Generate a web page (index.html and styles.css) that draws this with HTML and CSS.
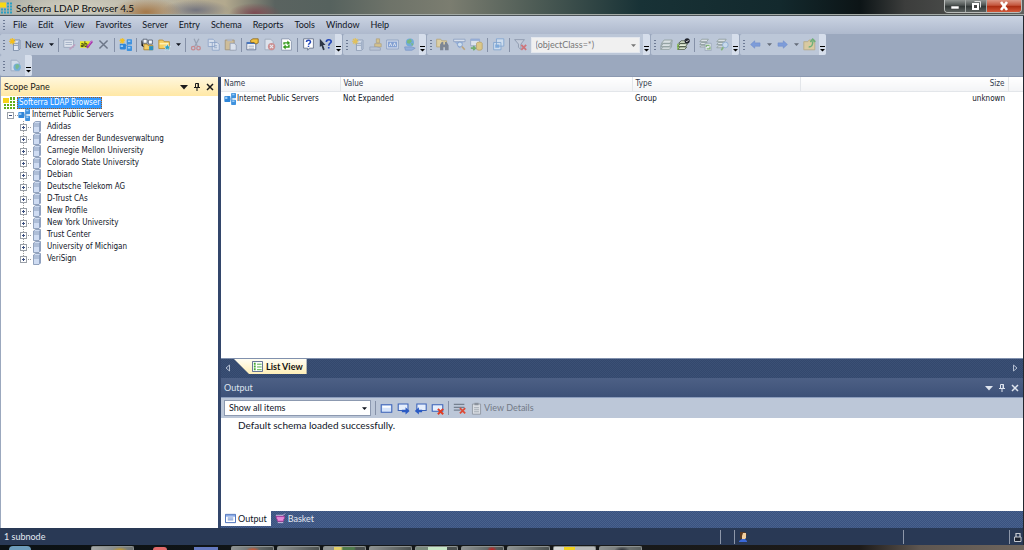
FILE: index.html
```html
<!DOCTYPE html>
<html lang="en">
<head>
    <meta charset="UTF-8">
    <meta name="viewport" content="width=device-width, initial-scale=1.0">
    <title>Softerra LDAP Browser 4.5</title>
    <link rel="stylesheet" href="styles.css">
</head>
<body>
    <!-- icon set -->
    <svg class="sprite" width="0" height="0" aria-hidden="true">
        <symbol id="app" viewBox="0 0 12 12">
            <path fill="#2a9fc4" d="M7 1h2v2H7zM10 1h2v2h-2zM7 4h2v2H7zM10 4h2v2h-2zM1 7h2v2H1zM4 7h2v2H4zM7 7h2v2H7zM10 7h2v2h-2zM1 10h2v2H1zM4 10h2v2H4zM7 10h2v2H7zM10 10h2v2h-2z"/>
            <path fill="#f7d914" d="M0 1h6v5H0z"/>
        </symbol>
        <symbol id="root" viewBox="0 0 12 12">
            <path fill="#5fae1c" d="M7 0h2v3H7zM10 0h2v3h-2zM7 4h2v2H7zM10 4h2v2h-2zM1 7h2v2H1zM4 7h2v2H4zM7 7h2v2H7zM10 7h2v2h-2zM1 10h2v2H1zM4 10h2v2H4zM7 10h2v2H7zM10 10h2v2h-2z"/>
            <path fill="#f5d21c" d="M0 1h6v5H0z"/>
        </symbol>
        <symbol id="server" viewBox="0 0 10 12">
            <path fill="#cfdcf2" stroke="#7c8fae" stroke-width=".8" d="M1.500 2l2-1.500h5v9.500l-1.500 1.500h-5.500z"/>
            <path fill="#8da0c0" d="M7 2l1.500-1.200v9.200L7 11.200z"/>
            <path stroke="#7c8fae" stroke-width=".8" d="M2 3h5M2 5h5"/>
        </symbol>
        <symbol id="nodes" viewBox="0 0 16 16">
            <path fill="none" stroke="#6a9fd0" stroke-width="1.500" d="M6 8h4l2-4M10 8l2 4"/>
            <rect x=".5" y="4" width="8" height="8" rx="1" fill="#2f86d8"/>
            <rect x="9.500" y="0" width="6.500" height="7" rx="1" fill="#3f92de"/>
            <rect x="9.500" y="9" width="6.500" height="7" rx="1" fill="#3f92de"/>
            <path fill="#9ccdf7" d="M1.500 5h3v3h-3zM11 1h3v2h-3zM11 10h3v2h-3z"/>
        </symbol>
        <symbol id="nodes-new" viewBox="0 0 16 16">
            <path fill="none" stroke="#6a9fd0" stroke-width="1.500" d="M7 9h3l2-4M10 9l2 4"/>
            <rect x="1" y="7" width="7.500" height="7" rx="1" fill="#2f86d8"/>
            <rect x="9.500" y="1.500" width="6.500" height="6.500" rx="1" fill="#3f92de"/>
            <rect x="9.500" y="9.500" width="6.500" height="6.500" rx="1" fill="#3f92de"/>
            <path fill="#9ccdf7" d="M2 9h3v2H2zM11 3h3v2h-3zM11 11h3v2h-3z"/>
            <path stroke="#f4c020" stroke-width="1.300" d="M4 0v7M.5 3.500h7M1.500 1l5 5M6.500 1l-5 5"/>
        </symbol>
        <symbol id="server-new" viewBox="0 0 16 16">
            <path fill="#e1e8f4" stroke="#6f819e" d="M5.500 4l2-1.500h6v11l-2 2h-6z"/>
            <path fill="#93a4bf" d="M11 4.500l2-1.500v10l-2 2z"/>
            <path stroke="#6f819e" d="M6 6.500h5M6 9h5"/>
            <path stroke="#f4bd1a" stroke-width="1.400" d="M4 0v8M0 4h8M1.200 1.200l5.600 5.600M6.800 1.200L1.200 6.800"/>
        </symbol>
        <symbol id="edit" viewBox="0 0 16 16">
            <path fill="#eef2f8" stroke="#7f8da6" d="M1 2.500h12v9H1z"/>
            <path stroke="#8b9ab5" d="M3 5.500h8M3 8h8"/>
            <path stroke="#c28bb2" stroke-width="2" d="M8 14l7-6"/>
        </symbol>
        <symbol id="rename" viewBox="0 0 16 16">
            <path fill="#e8ea28" d="M0 4h12v8H0z"/>
            <path fill="none" stroke="#434a18" stroke-width="1.200" d="M1.500 7h2.500v3.500H1.500V9H4M6 4v6.500h2.500V7H6"/>
            <path stroke="#a234a8" stroke-width="2.800" d="M8.500 12l6.500-8"/>
            <path stroke="#d878d8" d="M9.500 10l5.500-7"/>
        </symbol>
        <symbol id="cross" viewBox="0 0 16 16">
            <path stroke="#6c7688" stroke-width="1.800" d="M3 3l10 10M13 3L3 13"/>
        </symbol>
        <symbol id="copy-server" viewBox="0 0 16 16">
            <path fill="#f5f7fa" stroke="#4a5568" d="M2.500 1.500h5v5h-5zM9 2.500h5v5H9z"/>
            <path fill="#f3cd66" stroke="#a77f26" d="M3.500 7.500h4l1 1.500h6v5.500h-11z"/>
            <path fill="#2b91c0" d="M10 10h5v5h-5z"/>
            <path stroke="#333" d="M1 3v6l2 2"/>
        </symbol>
        <symbol id="folder-star" viewBox="0 0 16 16">
            <path fill="#f6cf5f" stroke="#b58a2b" d="M1 2.500h5l1.500 2H14v8.500H1z"/>
            <path fill="#fff0b0" d="M2 6h11v2H2z"/>
            <path fill="#2a9fc4" stroke="#fff" stroke-width=".6" d="M11.500 7l1.400 3 3 .3-2.300 2 .7 3-2.800-1.600L8.700 15.300l.8-3-2.400-2 3-.3z"/>
        </symbol>
        <symbol id="cut" viewBox="0 0 16 16">
            <path stroke="#858ea0" stroke-width="1.500" d="M5 1l4 9M11 1L6 10"/>
            <circle cx="4" cy="12.500" r="2.200" fill="none" stroke="#c96b6b" stroke-width="1.600"/>
            <circle cx="10.500" cy="12.500" r="2.200" fill="none" stroke="#c96b6b" stroke-width="1.600"/>
        </symbol>
        <symbol id="copy" viewBox="0 0 16 16">
            <path fill="#e6edf8" stroke="#6e8dbd" d="M1.500 1.500h6l2 2v7h-8zM6.500 5.500h6l2.500 2.500v7H6.500z"/>
            <path stroke="#6e8dbd" d="M3 5.500h4M8.500 9.500h4M8.500 12h4"/>
        </symbol>
        <symbol id="paste" viewBox="0 0 16 16">
            <path fill="#d8b878" stroke="#927848" d="M1.500 2.500h11v12h-11z"/>
            <path fill="#a9afbb" d="M4 1h6v3H4z"/>
            <path fill="#edf1f8" stroke="#7b88a0" d="M7.500 6.500h5l2.500 2v6.500H7.500z"/>
        </symbol>
        <symbol id="props" viewBox="0 0 16 16">
            <path fill="#fdfdfd" stroke="#56688a" d="M1 5.500h11v9H1z"/>
            <path fill="#4776c0" d="M1 5h11v2.500H1z"/>
            <path stroke="#8694ac" d="M3 10h7M3 12.500h7"/>
            <path fill="#f1c240" stroke="#8a651c" d="M5.500 3l3-2H15v5l-3 1.500-2-2H6z"/>
        </symbol>
        <symbol id="doc-del" viewBox="0 0 16 16">
            <path fill="#eef1f6" stroke="#8a96a9" d="M2.500 1.500h7l3 3v10h-10z"/>
            <circle cx="10.500" cy="10.500" r="4.500" fill="#d5736d"/>
            <path stroke="#fff" stroke-width="1.400" d="M8.500 8.500l4 4M12.500 8.500l-4 4"/>
        </symbol>
        <symbol id="refresh" viewBox="0 0 16 16">
            <path fill="#fff" stroke="#7f8da6" d="M2 1h9l3 3v11H2z"/>
            <path fill="none" stroke="#339a1c" stroke-width="1.800" d="M5 8V6h5M11 8v3H6"/>
            <path fill="#339a1c" d="M9 3l3.500 3L9 8.500zM7 8l-3.500 3L7 14z"/>
        </symbol>
        <symbol id="help" viewBox="0 0 16 16">
            <path fill="#fff" stroke="#5a6780" d="M2 1h12v11.500H9l-2 2.500v-2.500H2z"/>
            <path fill="none" stroke="#2246b8" stroke-width="1.800" d="M5.500 5c0-3 5-3 5 0 0 1.500-2.500 1.500-2.500 3.200M8 9.500v1.700"/>
        </symbol>
        <symbol id="whats-this" viewBox="0 0 16 16">
            <path fill="#2c3546" d="M1 1l7 7.500H5L7 14l-2 1-2-5.500L1 11z"/>
            <path fill="none" stroke="#2246b8" stroke-width="2" d="M9 5c0-4 6-3.500 6-.5C15 6.500 12 6.500 12 9.500M12 11v2"/>
        </symbol>
        <symbol id="user-hand" viewBox="0 0 16 16">
            <path fill="#e2c168" stroke="#a2864a" stroke-width=".8" d="M9 1h4v5H9zM7 7h8v4H7z"/>
            <path fill="#b8c2d3" stroke="#78859d" stroke-width=".8" d="M1 11h8l5 1v3H1z"/>
        </symbol>
        <symbol id="monitor" viewBox="0 0 16 16">
            <path fill="#dde6f5" stroke="#6f89b5" d="M.8 2.500h14.400v11H.8z"/>
            <path fill="#648bd0" d="M2.500 4.500h11v7h-11z"/>
            <path fill="none" stroke="#fff" d="M4 10l1.500-4L7 10M9 10l1.500-4 1.500 4"/>
        </symbol>
        <symbol id="globe-user" viewBox="0 0 16 16">
            <circle cx="8.500" cy="5.500" r="5" fill="#4c9ddb"/>
            <path fill="#56b150" d="M5 3l4-2 2 3-3 3-3-1zM10 6l3 1-2 3z"/>
            <path fill="#7ea3dd" stroke="#5c80bd" d="M2 11h9l4 1.500L11 15H3z"/>
        </symbol>
        <symbol id="folder-find" viewBox="0 0 16 16">
            <path fill="#eed48a" stroke="#b29446" d="M.8 1.500h5l1.500 2H13V11H.8z"/>
            <path fill="#5c6470" d="M5 8l2-3h2v3h2V5h2l2.500 4v6H11v-4H9v4H5z"/>
        </symbol>
        <symbol id="filter-find" viewBox="0 0 16 16">
            <path fill="#e8eef8" stroke="#6f89b5" d="M.8 1.500h14v3h-14z"/>
            <path fill="#86a5da" d="M2 5h11l-4 4v4l-3-2V9z"/>
            <circle cx="8.500" cy="8" r="3" fill="#d8ecfb" stroke="#5a82c0"/>
            <path stroke="#b9924e" stroke-width="2" d="M11 10.500l3.500 4"/>
        </symbol>
        <symbol id="table-db" viewBox="0 0 16 16">
            <path fill="#eef2f8" stroke="#7f93b5" d="M.8 1.500h11v8h-11z"/>
            <path fill="#7f9fd6" d="M1 1h11v2.500H1z"/>
            <path fill="#ecc75c" stroke="#b2903c" d="M8 6.500c0-2 7-2 7 0v7c0 2-7 2-7 0z"/>
            <path stroke="#4ca13c" stroke-width="2" d="M1 12.500h5M4 10l2.500 2.500L4 15"/>
        </symbol>
        <symbol id="windows" viewBox="0 0 16 16">
            <path fill="#d9e9fa" stroke="#5c8fc9" d="M5.500 1h9v9h-9zM2 5.500h9v9H2z"/>
            <path fill="#5f9bdc" d="M4 8h5v4H4z"/>
        </symbol>
        <symbol id="filter-off" viewBox="0 0 16 16">
            <path fill="#c9d0dc" stroke="#6d7a91" d="M.8 2h12L8.500 7.500V14l-3-2.500v-4z"/>
            <path stroke="#d84a4a" stroke-width="2.200" d="M9 8.500l6 6M15 8.500l-6 6"/>
        </symbol>
        <symbol id="layers" viewBox="0 0 16 16">
            <path fill="#e9efe9" stroke="#75867b" d="M1 14l3-3h10l-2.500 3zM1 10.500l3-3.500h10l-2.500 3.500zM2 6.500L5 2.500h10l-3 4z"/>
            <path stroke="#75867b" d="M1 10.500V14M2 6.500L1 10M15 3l-1 8"/>
        </symbol>
        <symbol id="layers-check" viewBox="0 0 16 16">
            <path fill="#e6f0dc" stroke="#43503b" d="M1 14l3-3h8l-2.500 3zM1 10.500l3-3.500h9l-2.500 3.500zM2 6.500L5 3.500h7l-2 3z"/>
            <path stroke="#72b32c" stroke-width="1.500" d="M1.200 7v7"/>
            <circle cx="12.500" cy="3.500" r="3.200" fill="#20242c"/>
            <path fill="none" stroke="#fff" d="M11 3.500l1.200 1.200 2-2.200"/>
        </symbol>
        <symbol id="layers-sync" viewBox="0 0 16 16">
            <path fill="#edf1f0" stroke="#75867b" d="M1 8l2-2.500h7L8 8zM1 4.500L3.500 1.500h8l-2 3zM1 11l2-2h5v2z"/>
            <path fill="#f4f8f4" stroke="#8593a8" d="M7.500 6.500h7.500v9H7.500z"/>
            <path fill="none" stroke="#64a84a" stroke-width="1.500" d="M9 11V9h4M13.500 10.500v3h-4"/>
        </symbol>
        <symbol id="layers-find" viewBox="0 0 16 16">
            <path fill="#edf1f0" stroke="#75867b" d="M1 12l2-2.500h7L8 12zM1 8l2-2.500h8L9 8zM1 4.500L3.500 1.500h9l-2 3z"/>
            <circle cx="11.500" cy="8.500" r="3.500" fill="#cfe4f6" stroke="#6f9ac9"/>
            <path stroke="#64a84a" stroke-width="2" d="M9 11.500L6.500 15"/>
        </symbol>
        <symbol id="arrow-left" viewBox="0 0 16 16">
            <path fill="#5c86dc" stroke="#4870c4" stroke-width=".8" d="M2 8l5-4.500v2.500h6.500v4H7v2.500z"/>
        </symbol>
        <symbol id="arrow-right" viewBox="0 0 16 16">
            <path fill="#5c86dc" stroke="#4870c4" stroke-width=".8" d="M14 8L9 3.500v2.500H2.500v4H9v2.500z"/>
        </symbol>
        <symbol id="folder-up" viewBox="0 0 16 16">
            <path fill="#e9cd84" stroke="#b39a58" d="M1 4.500h5l1.500-2h7V14.500H1z"/>
            <path fill="none" stroke="#43a349" stroke-width="2" d="M7 11c4 0 5-2 5-7M9 5l3-3.500L15 5"/>
        </symbol>
        <symbol id="cube" viewBox="0 0 16 16">
            <path fill="#dce6f3" stroke="#8496b3" d="M2.500 1.500h7l3 3v10h-10z"/>
            <circle cx="10" cy="10" r="4.500" fill="#4ea1d8"/>
            <path fill="#55b36a" d="M8 7l3-1 2 3-3 4-2-2z"/>
        </symbol>
        <symbol id="list" viewBox="0 0 12 12">
            <path fill="#fff" stroke="#53648a" d="M.5.500h11v11H.5z"/>
            <path fill="#46a832" d="M2 2h2v2H2zM2 5h2v2H2zM2 8h2v2H2z"/>
            <path stroke="#46a832" d="M5.500 3.500h5M5.500 6.500h5M5.500 9.500h5"/>
        </symbol>
        <symbol id="msg" viewBox="0 0 16 16">
            <path fill="#d5e4fb" stroke="#3a62b8" stroke-width="1.300" d="M1.500 3.500h13v9h-13z"/>
            <path fill="#fff" d="M3 5h10v2H3z"/>
        </symbol>
        <symbol id="msg-next" viewBox="0 0 16 16">
            <path fill="#e5eefc" stroke="#3a62b8" stroke-width="1.300" d="M1.500 2.500h12v8h-12z"/>
            <path fill="#2b5bc4" d="M6 9.500h4.500V6.500l5 4.500-5 4.500v-3H6z"/>
        </symbol>
        <symbol id="msg-prev" viewBox="0 0 16 16">
            <path fill="#e5eefc" stroke="#3a62b8" stroke-width="1.300" d="M3.500 2.500h11.500v8H3.500z"/>
            <path fill="#2b5bc4" d="M10 9.500H6V6.500L1 11l5 4.500v-3h4z"/>
        </symbol>
        <symbol id="msg-del" viewBox="0 0 16 16">
            <path fill="#e5eefc" stroke="#3a62b8" stroke-width="1.300" d="M1.500 3.500h13v8h-13z"/>
            <path stroke="#e03a22" stroke-width="2.400" d="M8.500 8.500l6.500 6.500M15 8.500L8.500 15"/>
        </symbol>
        <symbol id="lines-del" viewBox="0 0 16 16">
            <path stroke="#75808f" stroke-width="1.600" d="M1 3h13M1 6.500h13M1 10h8"/>
            <path stroke="#dc4a36" stroke-width="2.200" d="M8.500 7.500l6.500 6.500M15 7.500L8.500 14"/>
        </symbol>
        <symbol id="clip" viewBox="0 0 16 16">
            <path fill="#d9dde3" stroke="#8a919c" d="M3 2.500h10v12.500H3z"/>
            <path fill="#8a919c" d="M5.500 1h5v3h-5z"/>
            <path stroke="#9aa1ab" d="M5 7h6M5 9.500h6M5 12h6"/>
        </symbol>
        <symbol id="output" viewBox="0 0 12 12">
            <path fill="#fff" stroke="#3d66b5" d="M.5 1.500h11v9H.5z"/>
            <path fill="#8aaae6" d="M1 2h10v2H1z"/>
            <path stroke="#5a7fc8" d="M3 5.500h6M3 7.500h6"/>
        </symbol>
        <symbol id="basket" viewBox="0 0 12 12">
            <path fill="#d85fc8" stroke="#a13c95" d="M1 3.500h9.500L9 9H3z"/>
            <path stroke="#f3b6ea" d="M2 5.500h8M3 7.500h6"/>
            <path fill="none" stroke="#d9c4e6" d="M1 2.500h8L11 .5M3 10.500h6"/>
        </symbol>
        <symbol id="person" viewBox="0 0 10 12">
            <path fill="#5b3a22" d="M2 1h5l2 3-3 3-4 1z"/>
            <path fill="#f2cf9f" d="M5 2h3v5l-2 2H4V5z"/>
            <path fill="#3a68d8" d="M1 10l3-2h3l2 2v1H1z"/>
        </symbol>
        <symbol id="lock" viewBox="0 0 10 12">
            <path fill="none" stroke="#c3c8d0" stroke-width="1.200" d="M3 6V2.500h4V6"/>
            <path fill="#1c222e" stroke="#c3c8d0" d="M1.500 6h6.500v4.500H1.500z"/>
        </symbol>
        <symbol id="down" viewBox="0 0 8 8">
            <path fill="currentColor" d="M0 2h8L4 6.500z"/>
        </symbol>
        <symbol id="pin" viewBox="0 0 8 8">
            <path fill="none" stroke="currentColor" d="M2.500 4.500v-4h3v4M1 4.500h6M4 4.500V8"/>
            <path stroke="currentColor" d="M5 0v4.500"/>
        </symbol>
        <symbol id="close" viewBox="0 0 8 8">
            <path stroke="currentColor" stroke-width="1.500" d="M1 1l6 6M7 1L1 7"/>
        </symbol>
        <symbol id="more" viewBox="0 0 5 6">
            <path fill="currentColor" d="M0 0h5v1H0zM0 3h5L2.500 5.500z"/>
        </symbol>
        <symbol id="scroll-left" viewBox="0 0 6 8">
            <path fill="none" stroke="currentColor" d="M4.500 1v6L1 4z"/>
        </symbol>
        <symbol id="scroll-right" viewBox="0 0 6 8">
            <path fill="none" stroke="currentColor" d="M1.500 1v6L5 4z"/>
        </symbol>
    </svg>

    <header class="titlebar">
        <svg class="app-icon"><use href="#app"/></svg>
        <h1>Softerra LDAP Browser 4.5</h1>
        <div class="window-buttons">
            <button type="button" aria-label="Minimize"><svg viewBox="0 0 12 10"><path fill="#fff" stroke="#444" stroke-width=".6" d="M2 5h8v3H2z"/></svg></button>
            <button type="button" aria-label="Restore"><svg viewBox="0 0 12 10"><path fill="none" stroke="#ddd" d="M4.500.500h6v6"/><path fill="#444" stroke="#fff" stroke-width="2" d="M3 3h5v5H3z"/></svg></button>
            <button type="button" class="win-close" aria-label="Close"><svg viewBox="0 0 12 10"><path stroke="#fff" stroke-width="2.600" d="M3 1l6 8M9 1L3 9"/></svg></button>
        </div>
    </header>

    <div class="window">
        <nav class="menubar">
            <span class="grip"></span>
            <a href="#">File</a>
            <a href="#">Edit</a>
            <a href="#">View</a>
            <a href="#">Favorites</a>
            <a href="#">Server</a>
            <a href="#">Entry</a>
            <a href="#">Schema</a>
            <a href="#">Reports</a>
            <a href="#">Tools</a>
            <a href="#">Window</a>
            <a href="#">Help</a>
        </nav>

        <div class="toolbars">
            <div class="toolbar">
                <span class="grip"></span>
                <button type="button" class="tool"><svg class="icon"><use href="#server-new"/></svg>New <svg class="caret"><use href="#down"/></svg></button>
                <span class="sep"></span>
                <button type="button" class="tool dim" aria-label="Edit"><svg class="icon"><use href="#edit"/></svg></button>
                <button type="button" class="tool" aria-label="Rename"><svg class="icon"><use href="#rename"/></svg></button>
                <button type="button" class="tool" aria-label="Delete"><svg class="icon"><use href="#cross"/></svg></button>
                <span class="sep"></span>
                <button type="button" class="tool" aria-label="New group"><svg class="icon"><use href="#nodes-new"/></svg></button>
                <span class="sep"></span>
                <button type="button" class="tool" aria-label="Copy server"><svg class="icon"><use href="#copy-server"/></svg></button>
                <button type="button" class="tool" aria-label="Add to favorites"><svg class="icon"><use href="#folder-star"/></svg><svg class="caret"><use href="#down"/></svg></button>
                <span class="sep"></span>
                <button type="button" class="tool dim" aria-label="Cut"><svg class="icon"><use href="#cut"/></svg></button>
                <button type="button" class="tool dim" aria-label="Copy"><svg class="icon"><use href="#copy"/></svg></button>
                <button type="button" class="tool dim" aria-label="Paste"><svg class="icon"><use href="#paste"/></svg></button>
                <span class="sep"></span>
                <button type="button" class="tool" aria-label="Properties"><svg class="icon"><use href="#props"/></svg></button>
                <button type="button" class="tool dim" aria-label="Stop"><svg class="icon"><use href="#doc-del"/></svg></button>
                <button type="button" class="tool" aria-label="Refresh"><svg class="icon"><use href="#refresh"/></svg></button>
                <span class="sep"></span>
                <button type="button" class="tool" aria-label="Help"><svg class="icon"><use href="#help"/></svg></button>
                <button type="button" class="tool" aria-label="What's this"><svg class="icon"><use href="#whats-this"/></svg></button>
                <button type="button" class="overflow" aria-label="More"><svg><use href="#more"/></svg></button>
            </div>
            <div class="toolbar">
                <span class="grip"></span>
                <button type="button" class="tool dim" aria-label="New entry"><svg class="icon"><use href="#server-new"/></svg></button>
                <button type="button" class="tool dim" aria-label="Credentials"><svg class="icon"><use href="#user-hand"/></svg></button>
                <button type="button" class="tool dim" aria-label="Monitor"><svg class="icon"><use href="#monitor"/></svg></button>
                <button type="button" class="tool dim" aria-label="Web"><svg class="icon"><use href="#globe-user"/></svg></button>
                <button type="button" class="overflow" aria-label="More"><svg><use href="#more"/></svg></button>
            </div>
            <div class="toolbar">
                <span class="grip"></span>
                <button type="button" class="tool dim" aria-label="Search"><svg class="icon"><use href="#folder-find"/></svg></button>
                <button type="button" class="tool dim" aria-label="Quick search"><svg class="icon"><use href="#filter-find"/></svg></button>
                <button type="button" class="tool dim" aria-label="Export"><svg class="icon"><use href="#table-db"/></svg></button>
                <span class="sep"></span>
                <button type="button" class="tool dim" aria-label="Windows"><svg class="icon"><use href="#windows"/></svg></button>
                <span class="sep"></span>
                <button type="button" class="tool dim" aria-label="Clear filter"><svg class="icon"><use href="#filter-off"/></svg></button>
                <span class="combo filter">
                    <select aria-label="Filter" disabled><option>(objectClass=*)</option></select>
                    <svg class="caret"><use href="#down"/></svg>
                </span>
                <button type="button" class="overflow" aria-label="More"><svg><use href="#more"/></svg></button>
            </div>
            <div class="toolbar">
                <span class="grip"></span>
                <button type="button" class="tool dim" aria-label="Schema"><svg class="icon"><use href="#layers"/></svg></button>
                <button type="button" class="tool" aria-label="Check schema"><svg class="icon"><use href="#layers-check"/></svg></button>
                <span class="sep"></span>
                <button type="button" class="tool dim" aria-label="Reload schema"><svg class="icon"><use href="#layers-sync"/></svg></button>
                <button type="button" class="tool dim" aria-label="Find in schema"><svg class="icon"><use href="#layers-find"/></svg></button>
                <button type="button" class="overflow" aria-label="More"><svg><use href="#more"/></svg></button>
            </div>
            <div class="toolbar">
                <span class="grip"></span>
                <button type="button" class="tool dim" aria-label="Back"><svg class="icon"><use href="#arrow-left"/></svg><svg class="caret"><use href="#down"/></svg></button>
                <button type="button" class="tool dim" aria-label="Forward"><svg class="icon"><use href="#arrow-right"/></svg><svg class="caret"><use href="#down"/></svg></button>
                <button type="button" class="tool dim" aria-label="Up"><svg class="icon"><use href="#folder-up"/></svg></button>
                <button type="button" class="overflow" aria-label="More"><svg><use href="#more"/></svg></button>
            </div>
        </div>
        <div class="toolbars">
            <div class="toolbar">
                <span class="grip"></span>
                <button type="button" class="tool dim" aria-label="Administrator"><svg class="icon"><use href="#cube"/></svg></button>
                <button type="button" class="overflow" aria-label="More"><svg><use href="#more"/></svg></button>
            </div>
        </div>

        <main class="workspace">
            <aside class="scope">
                <div class="pane-head scope-head">
                    <h2>Scope Pane</h2>
                    <button type="button" aria-label="Menu"><svg><use href="#down"/></svg></button>
                    <button type="button" aria-label="Pin"><svg><use href="#pin"/></svg></button>
                    <button type="button" aria-label="Close"><svg><use href="#close"/></svg></button>
                </div>
                <div class="tree">
                    <div class="node"><svg class="node-icon"><use href="#root"/></svg><span class="selected">Softerra LDAP Browser</span></div>
                    <div class="node level1"><span class="toggle minus"></span><svg class="node-icon"><use href="#nodes"/></svg>Internet Public Servers</div>
                    <ul>
                        <li class="node"><span class="toggle"></span><svg class="node-icon"><use href="#server"/></svg>Adidas</li>
                        <li class="node"><span class="toggle"></span><svg class="node-icon"><use href="#server"/></svg>Adressen der Bundesverwaltung</li>
                        <li class="node"><span class="toggle"></span><svg class="node-icon"><use href="#server"/></svg>Carnegie Mellon University</li>
                        <li class="node"><span class="toggle"></span><svg class="node-icon"><use href="#server"/></svg>Colorado State University</li>
                        <li class="node"><span class="toggle"></span><svg class="node-icon"><use href="#server"/></svg>Debian</li>
                        <li class="node"><span class="toggle"></span><svg class="node-icon"><use href="#server"/></svg>Deutsche Telekom AG</li>
                        <li class="node"><span class="toggle"></span><svg class="node-icon"><use href="#server"/></svg>D-Trust CAs</li>
                        <li class="node"><span class="toggle"></span><svg class="node-icon"><use href="#server"/></svg>New Profile</li>
                        <li class="node"><span class="toggle"></span><svg class="node-icon"><use href="#server"/></svg>New York University</li>
                        <li class="node"><span class="toggle"></span><svg class="node-icon"><use href="#server"/></svg>Trust Center</li>
                        <li class="node"><span class="toggle"></span><svg class="node-icon"><use href="#server"/></svg>University of Michigan</li>
                        <li class="node"><span class="toggle"></span><svg class="node-icon"><use href="#server"/></svg>VeriSign</li>
                    </ul>
                </div>
            </aside>

            <section class="content">
                <div class="list">
                    <table>
                        <colgroup><col class="c-name"><col class="c-value"><col class="c-type"><col><col class="c-end"></colgroup>
                        <thead>
                            <tr><th>Name</th><th>Value</th><th>Type</th><th class="num">Size</th><th></th></tr>
                        </thead>
                        <tbody>
                            <tr><td><span class="name"><svg class="node-icon"><use href="#nodes"/></svg>Internet Public Servers</span></td><td>Not Expanded</td><td>Group</td><td class="num">unknown</td><td></td></tr>
                        </tbody>
                    </table>
                </div>
                <div class="view-tabs">
                    <button type="button" class="scroll" aria-label="Scroll left"><svg><use href="#scroll-left"/></svg></button>
                    <button type="button" class="view-tab"><svg><use href="#list"/></svg>List View</button>
                    <button type="button" class="scroll last" aria-label="Scroll right"><svg><use href="#scroll-right"/></svg></button>
                </div>
                <div class="pane-head output-head">
                    <h2>Output</h2>
                    <button type="button" aria-label="Menu"><svg><use href="#down"/></svg></button>
                    <button type="button" aria-label="Pin"><svg><use href="#pin"/></svg></button>
                    <button type="button" aria-label="Close"><svg><use href="#close"/></svg></button>
                </div>
                <div class="output-bar">
                    <span class="combo show">
                        <select aria-label="Show"><option>Show all items</option></select>
                        <svg class="caret"><use href="#down"/></svg>
                    </span>
                    <span class="sep"></span>
                    <button type="button" class="tool" aria-label="Message"><svg class="icon"><use href="#msg"/></svg></button>
                    <button type="button" class="tool" aria-label="Next message"><svg class="icon"><use href="#msg-next"/></svg></button>
                    <button type="button" class="tool" aria-label="Previous message"><svg class="icon"><use href="#msg-prev"/></svg></button>
                    <button type="button" class="tool" aria-label="Delete message"><svg class="icon"><use href="#msg-del"/></svg></button>
                    <span class="sep"></span>
                    <button type="button" class="tool" aria-label="Clear all"><svg class="icon"><use href="#lines-del"/></svg></button>
                    <button type="button" class="tool details" disabled><svg class="icon"><use href="#clip"/></svg>View Details</button>
                </div>
                <div class="output-text">Default schema loaded successfully.</div>
                <div class="output-tabs">
                    <button type="button" class="active"><svg><use href="#output"/></svg>Output</button>
                    <button type="button"><svg><use href="#basket"/></svg>Basket</button>
                </div>
            </section>
        </main>

        <footer class="statusbar">
            <span class="status-text">1 subnode</span>
            <span class="status-cell"></span>
            <span class="status-cell user"><svg><use href="#person"/></svg></span>
            <span class="status-cell wide"></span>
            <span class="status-cell lock"><svg><use href="#lock"/></svg></span>
        </footer>
    </div>

    <div class="taskbar">
        <span class="orb"></span>
        <span class="task gold"></span>
        <span class="loose red"></span>
        <span class="loose blue"></span>
        <span class="task orange"></span>
        <span class="task"></span>
        <span class="task yellow"></span>
        <span class="task"></span>
        <span class="task green"></span>
        <span class="task crimson"></span>
        <span class="task"></span>
        <span class="task light"></span>
        <span class="task dark"></span>
    </div>
</body>
</html>
```
FILE: styles.css
```css
* {
    box-sizing: border-box;
}
body {
    margin: 0;
    min-height: 100vh;
    display: flex;
    flex-direction: column;
    font-family: Lato, "Open Sans", sans-serif;
    font-size: 9px;
    line-height: 12px;
    color: #10151f;
    background: #14181c;
}
h1, h2 {
    margin: 0;
    font-weight: normal;
}
button {
    font: inherit;
    color: inherit;
    padding: 0;
    border: 0;
    background: none;
    display: flex;
    align-items: center;
}
svg {
    display: block;
    flex: none;
}
.sprite {
    position: absolute;
}

/* title bar */
.titlebar {
    height: 16px;
    display: flex;
    align-items: center;
    border-bottom: 1px solid #4c5459;
    box-shadow: inset 0 -1px #a3aaa6;
    background:
        radial-gradient(ellipse 36px 14px at 146px 12px, #a5794a, transparent),
        radial-gradient(ellipse 34px 10px at 196px 10px, #74757f, transparent),
        radial-gradient(ellipse 26px 10px at 255px 13px, #7d4a52, transparent),
        radial-gradient(ellipse 130px 30px at 75px 8px, #d2cfc0, transparent),
        linear-gradient(90deg, #8f9996 0, #b0aa99 130px, #b3a98e 225px, #5a6360 275px, #56625e 330px, #6e7369 390px, #7b7d70 450px, #4b5a54 540px, #183236 640px, #13292d 780px, #0c1416 860px, #3c3d3c 905px, #5d5f5d 100%);
}
.titlebar h1 {
    flex: 1;
    font-size: 10px;
    line-height: 14px;
    color: #0c0f12;
}
.app-icon {
    width: 12px;
    height: 13px;
    margin-right: 4px;
}
.window-buttons {
    display: flex;
    align-self: flex-start;
    margin-right: 2px;
    border: 1px solid #b9bcba;
    border-top: 0;
    border-radius: 0 0 4px 4px;
    overflow: hidden;
}
.window-buttons button {
    width: 21px;
    height: 12px;
    justify-content: center;
    border-right: 1px solid #a3a8a6;
    background: linear-gradient(#8f9492, #4b5150 45%, #2f3534 50%, #5c6261);
}
.window-buttons .win-close {
    width: 34px;
    border-right: 0;
    background: linear-gradient(#dc9785, #c4553c 45%, #a82a10 50%, #d3593a);
}
.window-buttons svg {
    width: 12px;
    height: 10px;
}

.window {
    flex: 1;
    display: flex;
    flex-direction: column;
    border-right: 1px solid #22272e;
    background: #9ba8be;
}

/* menu and toolbars */
.menubar {
    height: 18px;
    display: flex;
    align-items: center;
    gap: 11px;
    background: linear-gradient(#cad3e2, #aeb9cd);
}
.menubar a {
    color: inherit;
    text-decoration: none;
}
.grip {
    width: 2px;
    height: 10px;
    background: repeating-linear-gradient(#6d7a94 0 1px, transparent 1px 3px);
}
.menubar .grip {
    margin-left: 3px;
    margin-right: -3px;
}
.toolbars {
    display: flex;
    height: 21px;
    gap: 1px;
    flex: none;
}
.toolbar {
    display: flex;
    align-items: center;
    gap: 4px;
    padding-left: 3px;
    border-radius: 2px;
    background: #bcc7d8;
}
.tool {
    gap: 3px;
}
.icon {
    width: 13px;
    height: 13px;
}
.dim .icon {
    opacity: .65;
}
.dim .caret {
    opacity: .5;
}
.caret {
    width: 5px;
    height: 5px;
}
.tool .caret {
    margin-left: 2px;
}
.sep {
    width: 1px;
    height: 14px;
    background: #8591a8;
}
.overflow {
    width: 7px;
    margin-left: -1px;
    align-self: stretch;
    justify-content: center;
    align-items: flex-end;
    padding-bottom: 3px;
    border-radius: 0 2px 2px 0;
    background: #d6deeb;
    color: #000;
}
.overflow svg {
    width: 5px;
    height: 6px;
}
.combo {
    position: relative;
    display: flex;
}
.combo select {
    appearance: none;
    width: 100%;
    height: 16px;
    padding: 0 12px 0 4px;
    border: 1px solid #8c99b0;
    border-radius: 0;
    background: #fff;
    font: inherit;
    color: #10151f;
    opacity: 1;
}
.combo .caret {
    position: absolute;
    right: 4px;
    top: 6px;
}
.filter {
    width: 109px;
}
.filter select {
    background: #f0f0f0;
    border-color: #e3e7ee;
    color: #777;
}
.filter .caret {
    color: #777;
}

/* workspace */
.workspace {
    flex: 1;
    display: flex;
    gap: 3px;
    background: #33466b;
    border-top: 1px solid #8b98b0;
}
.scope {
    flex: 0 0 218px;
    display: flex;
    flex-direction: column;
    background: #fff;
    border-left: 1px solid #9ba8be;
}
.pane-head {
    display: flex;
    align-items: center;
    gap: 5px;
    padding: 0 4px 0 3px;
    height: 19px;
}
.pane-head h2 {
    flex: 1;
    font-size: 9px;
}
.pane-head svg {
    width: 8px;
    height: 8px;
}
.scope-head {
    background: linear-gradient(#fff7dd, #ffe8a6);
    color: #1b1b1b;
}
.tree, table {
    font-family: "DejaVu Sans Condensed", "DejaVu Sans", sans-serif;
    font-size: 8px;
}
.tree {
    flex: 1;
    padding: 1px 0 0 2px;
}
.tree ul {
    list-style: none;
    margin: 0 0 0 16px;
    padding: 0;
    background: repeating-linear-gradient(#9a9a9a 0 1px, transparent 1px 2px) 4px 0 / 1px 138px no-repeat;
}
.node {
    display: flex;
    align-items: center;
    height: 12px;
    white-space: nowrap;
}
.node-icon {
    width: 12px;
    height: 12px;
    margin-right: 2px;
}
li .node-icon {
    margin-right: 4px;
}
.selected {
    padding: 0 1px;
    line-height: 10px;
    color: #fff;
    background: #3399ff;
    border: 1px dotted #a85a14;
}
.level1 {
    padding-left: 3px;
}
.toggle {
    width: 7px;
    height: 7px;
    margin: 0 4px 0 1px;
    border: 1px solid #9aa0a8;
    background:
        linear-gradient(#3b4f80, #3b4f80) 1px 2px / 3px 1px no-repeat,
        linear-gradient(#3b4f80, #3b4f80) 2px 1px / 1px 3px no-repeat,
        #fff;
}
/* dotted connector to the icon */
.toggle::after {
    content: "";
    display: block;
    width: 3px;
    height: 1px;
    margin: 2px 0 0 7px;
    background: repeating-linear-gradient(90deg, #9a9a9a 0 1px, transparent 1px 2px);
}
.toggle.minus {
    background:
        linear-gradient(#3b4f80, #3b4f80) 1px 2px / 3px 1px no-repeat,
        #fff;
}

.content {
    flex: 1;
    min-width: 0;
    display: flex;
    flex-direction: column;
}
.list {
    flex: 1;
    background: #fff;
}
table {
    width: 100%;
    table-layout: fixed;
    border-collapse: collapse;
}
.c-name { width: 119px; }
.c-value { width: 292px; }
.c-type { width: 168px; }
.c-end { width: 15px; }
th, td {
    padding: 0 3px;
    text-align: left;
    font-weight: normal;
    white-space: nowrap;
}
th {
    height: 14px;
    border-right: 1px solid #e3e6ea;
    border-bottom: 1px solid #e3e6ea;
    background: linear-gradient(#fff, #f3f4f6);
    color: #333b4c;
}
th:last-child {
    border-right: 0;
}
td {
    height: 15px;
}
.num {
    text-align: right;
}
.name {
    display: flex;
    align-items: center;
}
.name .node-icon {
    margin-right: 1px;
}

.view-tabs {
    height: 20px;
    display: flex;
    align-items: flex-start;
    border-top: 1px solid #8090ad;
    background: repeating-conic-gradient(#33486d 0 25%, #3b5075 0 50%) 0 0 / 2px 2px;
}
.scroll {
    width: 13px;
    height: 17px;
    justify-content: center;
    color: #b4bfd2;
}
.scroll svg {
    width: 6px;
    height: 8px;
}
.scroll.last {
    margin-left: auto;
    margin-right: 2px;
}
.view-tab {
    height: 15px;
    gap: 3px;
    padding: 0 4px 0 18px;
    font-weight: bold;
    color: #111;
    background: linear-gradient(#fffdf3, #ffefb8);
    clip-path: polygon(0 0, 100% 0, 100% 100%, 15px 100%);
}
.view-tab svg {
    width: 11px;
    height: 11px;
}
.output-head {
    background: linear-gradient(#4d6085, #3d5178);
    color: #dfe5ef;
}
.output-bar {
    height: 21px;
    display: flex;
    align-items: center;
    gap: 4px;
    padding-left: 3px;
    border-top: 1px solid #8c9dbd;
    background: #bcc7d8;
}
.show {
    width: 147px;
}
.output-bar .details {
    gap: 1px;
    color: #737a87;
}
.output-text {
    height: 93px;
    padding: 0 17px;
    font-size: 10px;
    line-height: 14px;
    background: #fff;
}
.output-tabs {
    height: 17px;
    display: flex;
    align-items: flex-start;
    gap: 2px;
    background: repeating-conic-gradient(#3a5280 0 25%, #48618c 0 50%) 0 0 / 2px 2px;
    color: #e4e9f2;
}
.output-tabs button {
    height: 15px;
    gap: 2px;
    padding: 0 2px;
}
.output-tabs svg {
    width: 11px;
    height: 11px;
}
.output-tabs .active {
    padding: 0 4px;
    background: #fff;
    color: #10151f;
}

/* status bar */
.statusbar {
    height: 17px;
    display: flex;
    align-items: center;
    background: #293955;
    color: #e4e9f2;
}
.status-text {
    flex: 1;
    padding-left: 4px;
}
.status-cell {
    width: 14px;
    height: 14px;
    display: flex;
    align-items: center;
    border-left: 1px solid #8d97a9;
}
.status-cell.user {
    width: 169px;
    padding-left: 3px;
}
.status-cell.wide {
    width: 106px;
}
.status-cell.lock {
    padding-left: 3px;
}
.status-cell svg {
    width: 10px;
    height: 12px;
}

/* strip of the desktop taskbar */
.taskbar {
    height: 5px;
    display: flex;
    gap: 3px;
    overflow: hidden;
    background: linear-gradient(90deg, #0b1114 0, #17191a 620px, #1d1a18 860px, #5e5650 920px, #6e655d 100%);
}
.orb {
    width: 22px;
    margin: 1px 57px 0 9px;
    border-radius: 11px 11px 0 0;
    background: #6d9dbb;
}
.task {
    width: 43px;
    margin-top: 1px;
    border: 1px solid #8b908f;
    border-bottom: 0;
    border-radius: 2px 2px 0 0;
    background: linear-gradient(90deg, #8e9291, #4b5150);
}
.loose {
    width: 14px;
    margin: 2px 16px 0;
    background: #e26a6a;
    border-radius: 7px 7px 0 0;
}
.loose.blue {
    width: 24px;
    margin: 2px 10px 0 8px;
    border-radius: 0;
    background: #6479c0;
}
.gold { background: radial-gradient(8px 3px at 28px 3px, #c39b2c, transparent), linear-gradient(90deg, #a5a8a6, #6f7472); }
.orange { background: radial-gradient(7px 3px at 21px 3px, #d4562f, transparent), linear-gradient(90deg, #8e9291, #4b5150); }
.yellow { background: linear-gradient(90deg, #8e9291 10px, #e3cf68 10px 17px, #4f7a4c 19px 30px, #4b5150 32px); }
.green { background: linear-gradient(90deg, #7a8a7c 12px, #c6e6c6 12px 31px, #4b5150 31px); }
.crimson { background: radial-gradient(5px 4px at 30px 3px, #d01818, transparent), linear-gradient(90deg, #8e9291, #4b5150); }
.light { background: linear-gradient(90deg, #d5d7d6 10px, #f1d21f 10px 21px, #b8bab9 21px); }
.dark { background: radial-gradient(8px 5px at 22px 4px, #20242c, transparent), linear-gradient(90deg, #8e9291, #5b6160); }
```
